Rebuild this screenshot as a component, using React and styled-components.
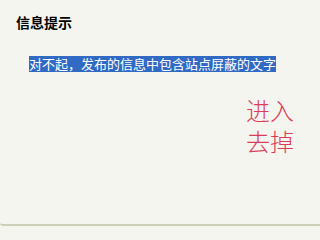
import React from "react";
import styled, { createGlobalStyle } from "styled-components";

const GlobalStyle = createGlobalStyle`
  html, body {
    margin: 0;
    padding: 0;
    background: #f5f5f0;
  }
`;

const Panel = styled.div`
  box-sizing: border-box;
  width: 100%;
  min-width: 279px;
  height: 226px;
  overflow: hidden;
  background-color: #f5f5f0;
  border-bottom: 2px solid #cdcfb6;
  border-radius: 0 0 0 3px;
  padding: 15px 0 0 16px;
  font-family: "Noto Sans CJK SC", "Liberation Sans", sans-serif;
`;

const Title = styled.div`
  font-size: 14px;
  line-height: 14px;
  font-weight: 700;
  color: #000000;
`;

const Message = styled.div`
  margin: 27px 0 0 13px;
  font-size: 13px;
  line-height: 16px;
  white-space: nowrap;
`;

const Highlight = styled.span`
  display: inline-block;
  height: 16px;
  line-height: 16px;
  background-color: #316ac5;
  color: #ffffff;
`;

const Notice = styled.div`
  margin: 22px 0 0 230px;
  font-size: 24px;
  line-height: 31px;
  font-weight: 300;
  color: #dc3c58;
  white-space: nowrap;
`;

const App = () => {
  return (
    <>
      <GlobalStyle />
      <Panel>
        <Title>信息提示</Title>
        <Message>
          <Highlight>对不起，发布的信息中包含站点屏蔽的文字</Highlight>
        </Message>
        <Notice>
          进入
          <br />
          去掉
        </Notice>
      </Panel>
    </>
  );
};

export default App;
